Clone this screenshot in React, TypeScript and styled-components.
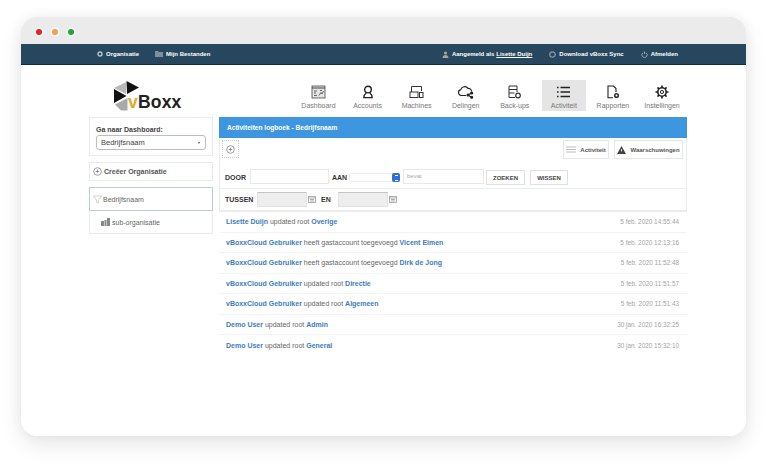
import React from 'react';
import styled, { createGlobalStyle } from 'styled-components';

const GlobalStyle = createGlobalStyle`
  html, body {
    margin: 0;
    padding: 0;
    background: #fff;
    font-family: 'Liberation Sans', Arial, sans-serif;
  }
  * { box-sizing: border-box; }
`;

const Page = styled.div`
  width: 774px;
  height: 467px;
  padding: 17px 28px 31px 21px;
  overflow: hidden;
`;

const Window = styled.div`
  width: 725px;
  height: 419px;
  background: #fff;
  border-radius: 16px;
  overflow: hidden;
  box-shadow: 0 9px 22px rgba(0, 0, 0, 0.09), 0 0 14px rgba(0, 0, 0, 0.05);
`;

const TitleBar = styled.div`
  height: 27px;
  background: #ebebeb;
  display: flex;
  align-items: center;
  gap: 10px;
  padding: 2px 0 0 15px;
`;

const Dot = styled.span<{ $color: string }>`
  width: 6px;
  height: 6px;
  border-radius: 50%;
  background: ${(p) => p.$color};
  box-shadow: 0 0 0 2px #f6f6f6;
`;

const TopBar = styled.div`
  height: 21px;
  background: #27475f;
  border-bottom: 1px solid #14293c;
  display: flex;
  align-items: center;
  padding: 0 68px 0 76px;
  color: #fff;
  font-size: 6px;
  font-weight: bold;
`;

const TopGroup = styled.div<{ $gap: number }>`
  display: flex;
  align-items: center;
  gap: ${(p) => p.$gap}px;
`;

const TopItem = styled.span`
  display: flex;
  align-items: center;
  gap: 3px;
  white-space: nowrap;
  svg { flex: none; }
  u { text-decoration: underline; margin-left: 2px; }
`;

const Spacer = styled.div`
  flex: 1;
`;

const Content = styled.div`
  padding: 0 59px 0 68px;
`;

const Header = styled.div`
  height: 52px;
  display: flex;
  align-items: flex-start;
  justify-content: space-between;
  padding: 15px 2.8px 0 24px;
`;

const Logo = styled.div`
  display: flex;
  align-items: flex-end;
  height: 31px;
`;

const Wordmark = styled.div`
  margin-left: -12px;
  font-size: 17.5px;
  line-height: 17px;
  font-weight: bold;
  color: #222;
  letter-spacing: 0.2px;
  span { color: #e3a92f; }
`;

const Nav = styled.div`
  display: flex;
  gap: 4.7px;
`;

const NavItem = styled.div<{ $active?: boolean }>`
  width: 44.4px;
  height: 31px;
  display: flex;
  flex-direction: column;
  align-items: center;
  justify-content: flex-end;
  gap: 2px;
  padding-bottom: 1px;
  font-size: 7px;
  line-height: 9px;
  color: #777;
  white-space: nowrap;
  background: ${(p) => (p.$active ? '#e5e5e5' : 'transparent')};
  svg { flex: none; }
`;

const Columns = styled.div`
  display: flex;
  gap: 6px;
  align-items: flex-start;
`;

const Sidebar = styled.div`
  width: 124px;
  display: flex;
  flex-direction: column;
  gap: 6px;
`;

const Card = styled.div`
  border: 1px solid #ebebeb;
`;

const DashCard = styled(Card)`
  height: 39px;
  padding: 7px 6px 0 6px;
`;

const DashLabel = styled.div`
  font-size: 7px;
  line-height: 9px;
  font-weight: bold;
  color: #444;
  margin-bottom: 1px;
`;

const FakeSelect = styled.div`
  height: 15px;
  border: 1px solid #bdbdbd;
  border-radius: 3px;
  display: flex;
  align-items: center;
  justify-content: space-between;
  padding: 0 5px 0 4px;
  font-size: 7.5px;
  color: #444;
  i {
    width: 0;
    height: 0;
    border-left: 1.5px solid transparent;
    border-right: 1.5px solid transparent;
    border-top: 2.5px solid #555;
  }
`;

const CreateCard = styled(Card)`
  height: 19px;
  display: flex;
  align-items: center;
  gap: 2px;
  padding-left: 3px;
  font-size: 7px;
  font-weight: bold;
  color: #555;
`;

const TreeBox = styled.div`
  border: 1px solid #ebebeb;
  border-top: none;
`;

const TreeRoot = styled.div`
  height: 24px;
  margin-left: -1px;
  margin-right: -1px;
  border: 1px solid #bccbdb;
  display: flex;
  align-items: center;
  gap: 1px;
  padding-left: 3px;
  font-size: 7px;
  color: #666;
`;

const TreeChild = styled.div`
  height: 22px;
  display: flex;
  align-items: center;
  gap: 2px;
  padding-left: 11px;
  font-size: 7px;
  color: #666;
`;

const Main = styled.div`
  width: 468px;
`;

const PanelTitle = styled.div`
  height: 21px;
  background: #3f96e0;
  color: #fff;
  font-size: 6.6px;
  font-weight: bold;
  display: flex;
  align-items: center;
  padding-left: 8px;
`;

const Toolbox = styled.div`
  border: 1px solid #ececec;
  border-top: none;
  border-bottom-width: 2px;
`;

const ToolRow = styled.div`
  height: 29px;
  display: flex;
  align-items: flex-start;
  justify-content: space-between;
  padding: 2px 3px 0 2px;
`;

const ToolRight = styled.div`
  display: flex;
  gap: 5px;
`;

const PlusBox = styled.div`
  width: 17px;
  height: 18px;
  border: 1px dotted #ccc;
  display: flex;
  align-items: center;
  justify-content: center;
`;

const ToolButton = styled.div<{ $width: number }>`
  width: ${(p) => p.$width}px;
  height: 19px;
  border: 1px solid #e6e6e6;
  display: flex;
  align-items: center;
  justify-content: center;
  gap: 4px;
  font-size: 6px;
  font-weight: bold;
  color: #555;
`;

const FilterRow = styled.div<{ $height: number; $border?: boolean }>`
  height: ${(p) => p.$height}px;
  display: flex;
  align-items: center;
  padding-left: 5px;
  border-bottom: ${(p) => (p.$border ? '1px solid #ececec' : 'none')};
`;

const FilterLabel = styled.span<{ $width: number; $left?: number }>`
  width: ${(p) => p.$width}px;
  margin-left: ${(p) => p.$left ?? 0}px;
  flex: none;
  font-size: 7px;
  font-weight: bold;
  color: #333;
`;

const TextInput = styled.div<{ $width: number }>`
  width: ${(p) => p.$width}px;
  height: 15px;
  flex: none;
  margin-bottom: 2px;
  border: 1px solid #e8e8e8;
  font-size: 6px;
  line-height: 13px;
  color: #aaa;
  padding-left: 3px;
`;

const AanSelect = styled.div`
  width: 51px;
  height: 9px;
  flex: none;
  margin: 0 3px 0 0;
  border: 1px solid #ededed;
  border-radius: 2px;
  display: flex;
  justify-content: flex-end;
`;

const AanArrow = styled.i`
  width: 8px;
  height: 9px;
  margin: -1px;
  border-radius: 2px;
  background: #2f6fd8;
  display: flex;
  align-items: center;
  justify-content: center;
  &::after {
    content: '';
    width: 3px;
    height: 4px;
    border-top: 1px solid #fff;
    border-bottom: 1px solid #fff;
  }
`;

const SearchButton = styled.div<{ $width: number; $left: number }>`
  width: ${(p) => p.$width}px;
  margin-left: ${(p) => p.$left}px;
  height: 15px;
  flex: none;
  border: 1px solid #e0e0e0;
  display: flex;
  align-items: center;
  justify-content: center;
  font-size: 6px;
  font-weight: bold;
  color: #444;
`;

const DateInput = styled.div`
  width: 50px;
  height: 15px;
  flex: none;
  background: #eeeeee;
  border: 1px solid #e2e2e2;
  border-top-color: #c4c4c4;
`;

const CalendarWrap = styled.span`
  width: 14px;
  flex: none;
  display: flex;
  padding-left: 1px;
`;

const LogList = styled.div`
  display: flex;
  flex-direction: column;
`;

const LogRow = styled.div`
  height: 20.5px;
  display: flex;
  align-items: center;
  justify-content: space-between;
  padding: 0 8px 0 7px;
  border-bottom: 1px solid #f3f3f3;
  font-size: 7px;
  color: #666;
  &:last-child { border-bottom: none; }
  b { color: #3d7cbc; }
`;

const LogDate = styled.span`
  font-size: 6.4px;
  color: #a3a3a3;
`;

const Cal = () => (
  <svg width="8" height="7" viewBox="0 0 8 7" fill="none" stroke="#999" strokeWidth="0.8">
    <rect x="0.5" y="0.5" width="7" height="6" />
    <path d="M0.5 2h7M2 3.5h4M2 5h4" />
  </svg>
);

const Plus = () => (
  <svg width="9" height="9" viewBox="0 0 9 9" fill="none" stroke="#777" strokeWidth="0.7">
    <circle cx="4.5" cy="4.5" r="3.8" />
    <path d="M4.5 2.8v3.4M2.8 4.5h3.4" />
  </svg>
);

const navItems: { label: string; active?: boolean; icon: React.ReactNode }[] = [
  {
    label: 'Dashboard',
    icon: (
      <svg width="15" height="14" viewBox="0 0 15 14" fill="none" stroke="#444" strokeWidth="0.8">
        <rect x="1" y="1" width="13" height="12" fill="#e4e4e4" />
        <path d="M1 3h13" strokeWidth="1.2" />
        <path d="M3 6h3M3 8h2M3 10.5h3M8 10.5l2-3 1 1.5 1.5-3M9 5.5h2" />
      </svg>
    ),
  },
  {
    label: 'Accounts',
    icon: (
      <svg width="14" height="14" viewBox="0 0 14 14" fill="none" stroke="#222" strokeWidth="1.4">
        <circle cx="7" cy="4.6" r="3.3" />
        <path d="M2.8 13c0-2.4.9-4 2.4-5M11.2 13c0-2.4-.9-4-2.4-5M2.3 12.6h9.4" />
      </svg>
    ),
  },
  {
    label: 'Machines',
    icon: (
      <svg width="15" height="14" viewBox="0 0 15 14" fill="none" stroke="#333" strokeWidth="1">
        <path d="M2.5 7V1.5h10V6" />
        <rect x="1" y="7" width="8" height="5.5" />
        <rect x="10.5" y="7.5" width="3.5" height="5" />
      </svg>
    ),
  },
  {
    label: 'Delingen',
    icon: (
      <svg width="17" height="14" viewBox="0 0 17 14" fill="none" stroke="#222" strokeWidth="1.1">
        <path d="M9 10.5H4.2A3 3 0 0 1 3.8 4.6 4 4 0 0 1 11 3.4 3 3 0 0 1 14.5 6.5" />
        <path d="M11 10l3.5-2M11 10l3.5 2.2" />
        <circle cx="11" cy="10" r="1" fill="#222" />
        <circle cx="14.7" cy="8" r="1" fill="#222" />
        <circle cx="14.7" cy="12.3" r="1" fill="#222" />
      </svg>
    ),
  },
  {
    label: 'Back-ups',
    icon: (
      <svg width="15" height="14" viewBox="0 0 15 14" fill="none" stroke="#333" strokeWidth="1">
        <path d="M8 12.5H2V1h8v6M2 4.5h8M2 8h5.5" />
        <circle cx="11" cy="10.5" r="2.3" strokeWidth="1.2" />
      </svg>
    ),
  },
  {
    label: 'Activiteit',
    active: true,
    icon: (
      <svg width="15" height="14" viewBox="0 0 15 14" fill="none" stroke="#222" strokeWidth="1.4">
        <path d="M4.5 2.5H14M4.5 7H14M4.5 11.5H14" />
        <path d="M1 2.5h1.6M1 7h1.6M1 11.5h1.6" strokeWidth="1.6" />
      </svg>
    ),
  },
  {
    label: 'Rapporten',
    icon: (
      <svg width="14" height="14" viewBox="0 0 14 14" fill="none" stroke="#222" strokeWidth="1.1">
        <path d="M7 12.8H2V1h5.5L10 3.5V7" />
        <circle cx="10.5" cy="10.5" r="2.6" fill="#333" stroke="none" />
        <circle cx="10.5" cy="10.5" r="1" fill="#fff" stroke="none" />
      </svg>
    ),
  },
  {
    label: 'Instellingen',
    icon: (
      <svg width="14" height="14" viewBox="0 0 14 14" fill="none" stroke="#222">
        <circle cx="7" cy="7" r="4.2" strokeWidth="1.6" />
        <circle cx="7" cy="7" r="1.6" strokeWidth="1" />
        <path d="M7 .5v2.2M7 11.3v2.2M.5 7h2.2M11.3 7h2.2M2.4 2.4l1.6 1.6M10 10l1.6 1.6M11.6 2.4 10 4M4 10l-1.6 1.6" strokeWidth="1.7" />
      </svg>
    ),
  },
];

const logs: { who: string; action: string; what: string; when: string }[] = [
  { who: 'Lisette Duijn', action: 'updated root', what: 'Overige', when: '5 feb. 2020 14:55:44' },
  { who: 'vBoxxCloud Gebruiker', action: 'heeft gastaccount toegevoegd', what: 'Vicent Eimen', when: '5 feb. 2020 12:13:16' },
  { who: 'vBoxxCloud Gebruiker', action: 'heeft gastaccount toegevoegd', what: 'Dirk de Jong', when: '5 feb. 2020 11:52:48' },
  { who: 'vBoxxCloud Gebruiker', action: 'updated root', what: 'Directie', when: '5 feb. 2020 11:51:57' },
  { who: 'vBoxxCloud Gebruiker', action: 'updated root', what: 'Algemeen', when: '5 feb. 2020 11:51:43' },
  { who: 'Demo User', action: 'updated root', what: 'Admin', when: '30 jan. 2020 16:32:25' },
  { who: 'Demo User', action: 'updated root', what: 'General', when: '30 jan. 2020 15:32:10' },
];

export default function App() {
  return (
    <>
      <GlobalStyle />
      <Page>
        <Window>
          <TitleBar>
            <Dot $color="#e0202a" />
            <Dot $color="#eda24a" />
            <Dot $color="#1fa637" />
          </TitleBar>
          <TopBar>
            <TopGroup $gap={16}>
              <TopItem>
                <svg width="6" height="6" viewBox="0 0 6 6">
                  <circle cx="3" cy="3" r="2" fill="none" stroke="#b8c4ce" strokeWidth="1.4" />
                </svg>
                Organisatie
              </TopItem>
              <TopItem>
                <svg width="8" height="6" viewBox="0 0 8 6">
                  <path d="M0 0h3l1 1h4v5H0z" fill="#7d8e9c" />
                </svg>
                Mijn Bestanden
              </TopItem>
            </TopGroup>
            <Spacer />
            <TopGroup $gap={17}>
              <TopItem>
                <svg width="7" height="7" viewBox="0 0 7 7">
                  <circle cx="3.5" cy="2" r="1.6" fill="#a8a594" />
                  <path d="M0.5 7c0-2 1.2-3 3-3s3 1 3 3z" fill="#a8a594" />
                </svg>
                <span>
                  Aangemeld als<u>Lisette Duijn</u>
                </span>
              </TopItem>
              <TopItem>
                <svg width="7" height="7" viewBox="0 0 7 7">
                  <circle cx="3.5" cy="3.5" r="2.7" fill="none" stroke="#8b9aa6" strokeWidth="1.2" />
                </svg>
                Download vBoxx Sync
              </TopItem>
              <TopItem>
                <svg width="7" height="7" viewBox="0 0 7 7" fill="none" stroke="#9aa7b2" strokeWidth="1">
                  <path d="M2 1.8a2.6 2.6 0 1 0 3 0M3.5 0.5v2.5" />
                </svg>
                Afmelden
              </TopItem>
            </TopGroup>
          </TopBar>
          <Content>
            <Header>
              <Logo>
                <svg width="27" height="30" viewBox="0 0 27 30">
                  <path d="M1 7 13 1v12z" fill="#b9b9b9" />
                  <path d="M13.5 0 26 6.5 14 13z" fill="#111" />
                  <path d="M1 8 13.5 15 1 22z" fill="#111" />
                  <path d="M2 23.5 14.5 17v12.5H8z" fill="#a9a9a9" />
                </svg>
                <Wordmark>
                  <span>v</span>Boxx
                </Wordmark>
              </Logo>
              <Nav>
                {navItems.map((item) => (
                  <NavItem key={item.label} $active={item.active}>
                    {item.icon}
                    {item.label}
                  </NavItem>
                ))}
              </Nav>
            </Header>
            <Columns>
              <Sidebar>
                <DashCard>
                  <DashLabel>Ga naar Dashboard:</DashLabel>
                  <FakeSelect>
                    Bedrijfsnaam
                    <i />
                  </FakeSelect>
                </DashCard>
                <CreateCard>
                  <Plus />
                  Creëer Organisatie
                </CreateCard>
                <TreeBox>
                  <TreeRoot>
                    <svg width="9" height="9" viewBox="0 0 9 9" fill="none" stroke="#c4c4c4" strokeWidth="0.8">
                      <path d="M0.5 1h8L5.5 5v3L3.5 7V5z" />
                    </svg>
                    Bedrijfsnaam
                  </TreeRoot>
                  <TreeChild>
                    <svg width="9" height="8" viewBox="0 0 9 8" fill="#888">
                      <path d="M0 3h3v5H0zM3.5 2h2v6h-2zM6 0h3v8H6z" />
                    </svg>
                    sub-organisatie
                  </TreeChild>
                </TreeBox>
              </Sidebar>
              <Main>
                <PanelTitle>Activiteiten logboek - Bedrijfsnaam</PanelTitle>
                <Toolbox>
                  <ToolRow>
                    <PlusBox>
                      <Plus />
                    </PlusBox>
                    <ToolRight>
                      <ToolButton $width={46}>
                        <svg width="10" height="7" viewBox="0 0 10 7" stroke="#bbb" strokeWidth="1">
                          <path d="M0 1h10M0 3.5h10M0 6h10" />
                        </svg>
                        Activiteit
                      </ToolButton>
                      <ToolButton $width={69}>
                        <svg width="9" height="8" viewBox="0 0 9 8">
                          <path d="M4.5 0 9 8H0z" fill="#444" />
                          <path d="M4.5 3v2.5" stroke="#fff" strokeWidth="0.8" />
                        </svg>
                        Waarschuwingen
                      </ToolButton>
                    </ToolRight>
                  </ToolRow>
                  <FilterRow $height={22} $border>
                    <FilterLabel $width={25}>DOOR</FilterLabel>
                    <TextInput $width={79} />
                    <FilterLabel $width={17} $left={3}>AAN</FilterLabel>
                    <AanSelect>
                      <AanArrow />
                    </AanSelect>
                    <TextInput $width={81}>bevat</TextInput>
                    <SearchButton $width={39} $left={2}>ZOEKEN</SearchButton>
                    <SearchButton $width={38} $left={5}>WISSEN</SearchButton>
                  </FilterRow>
                  <FilterRow $height={21}>
                    <FilterLabel $width={32}>TUSSEN</FilterLabel>
                    <DateInput />
                    <CalendarWrap>
                      <Cal />
                    </CalendarWrap>
                    <FilterLabel $width={17}>EN</FilterLabel>
                    <DateInput />
                    <CalendarWrap>
                      <Cal />
                    </CalendarWrap>
                  </FilterRow>
                </Toolbox>
                <LogList>
                  {logs.map((log) => (
                    <LogRow key={log.when}>
                      <span>
                        <b>{log.who}</b> {log.action} <b>{log.what}</b>
                      </span>
                      <LogDate>{log.when}</LogDate>
                    </LogRow>
                  ))}
                </LogList>
              </Main>
            </Columns>
          </Content>
        </Window>
      </Page>
    </>
  );
}
